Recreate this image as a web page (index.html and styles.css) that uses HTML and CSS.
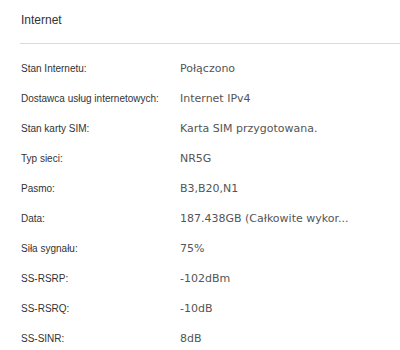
FILE: index.html
```html
<!DOCTYPE html>
<html lang="pl">
<head>
<meta charset="utf-8">
<link rel="stylesheet" href="styles.css">
</head>
<body>
<section class="panel">
  <h2 class="panel-title">Internet</h2>
  <dl class="info">
    <div class="row"><dt>Stan Internetu:</dt><dd>Połączono</dd></div>
    <div class="row"><dt>Dostawca usług internetowych:</dt><dd>Internet IPv4</dd></div>
    <div class="row"><dt>Stan karty SIM:</dt><dd>Karta SIM przygotowana.</dd></div>
    <div class="row"><dt>Typ sieci:</dt><dd>NR5G</dd></div>
    <div class="row"><dt>Pasmo:</dt><dd>B3,B20,N1</dd></div>
    <div class="row"><dt>Data:</dt><dd>187.438GB (Całkowite wykor...</dd></div>
    <div class="row"><dt>Siła sygnału:</dt><dd>75%</dd></div>
    <div class="row"><dt>SS-RSRP:</dt><dd>-102dBm</dd></div>
    <div class="row"><dt>SS-RSRQ:</dt><dd>-10dB</dd></div>
    <div class="row"><dt>SS-SINR:</dt><dd>8dB</dd></div>
  </dl>
</section>
</body>
</html>
```
FILE: styles.css
```css
html, body {
  margin: 0;
  background: #fff;
}

.panel {
  padding-left: 20px;
  font-family: "Liberation Sans", Arial, sans-serif;
}

.panel-title {
  margin: 0;
  height: 43px;
  line-height: 40px;
  font-size: 12px;
  font-weight: normal;
  color: #333;
  padding-left: 1px;
  border-bottom: 1px solid #d9d9d9;
}

.info {
  margin: 9px 0 0;
  padding-left: 1px;
}

.row {
  display: flex;
  align-items: center;
  height: 30px;
}

.row dt {
  width: 159px;
  flex: none;
  font-size: 10px;
  color: #333;
}

.row dd {
  margin: 0;
  font-family: "DejaVu Sans", Verdana, sans-serif;
  font-size: 11px;
  color: #555;
  white-space: nowrap;
}
```
